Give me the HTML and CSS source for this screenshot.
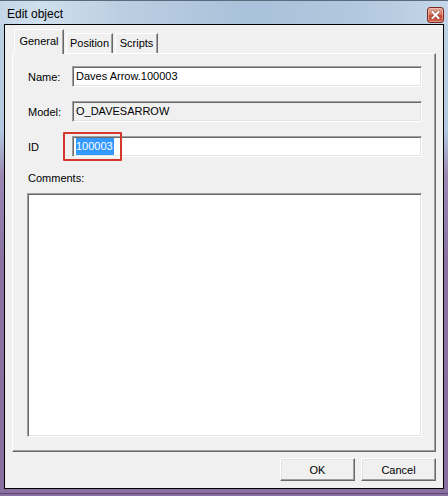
FILE: index.html
```html
<!DOCTYPE html>
<html>
<head>
<meta charset="utf-8">
<title>Edit object</title>
<link rel="stylesheet" href="styles.css">
</head>
<body>
<div class="window">
  <div class="titlebar">
    <span class="title">Edit object</span>
    <button class="close" aria-label="Close">
      <svg width="9" height="8" viewBox="0 0 9 8">
        <path d="M1.5 1 L7.5 7 M7.5 1 L1.5 7" stroke="#5a1a10" stroke-width="3.2" stroke-linecap="square" fill="none" opacity="0.45"/>
        <path d="M1.5 1 L7.5 7 M7.5 1 L1.5 7" stroke="#ffffff" stroke-width="2" stroke-linecap="square" fill="none"/>
      </svg>
    </button>
  </div>
  <div class="client">
    <div class="tabs">
      <div class="tab tab-general active">General</div>
      <div class="tab tab-position">Position</div>
      <div class="tab tab-scripts">Scripts</div>
    </div>
    <div class="panel">
      <div class="row">
        <span class="label">Name:</span>
        <div class="field">Daves Arrow.100003</div>
      </div>
      <div class="row">
        <span class="label">Model:</span>
        <div class="field readonly">O_DAVESARROW</div>
      </div>
      <div class="row id-row">
        <span class="label">ID</span>
        <div class="field"><span class="sel">100003</span></div>
        <span class="mark"></span>
      </div>
      <div class="comments-label">Comments:</div>
      <div class="field area"></div>
    </div>
    <div class="buttons">
      <button class="btn">OK</button>
      <button class="btn">Cancel</button>
    </div>
  </div>
  <div class="frame-bottom"></div>
</div>
</body>
</html>
```
FILE: styles.css
```css
* { box-sizing: border-box; }

html, body { margin: 0; padding: 0; }

body {
  width: 448px;
  height: 496px;
  overflow: hidden;
  background: linear-gradient(to bottom, #c0d3e6 0, #b3c9df 130px, #9c89b2 175px, #8b72a2 260px, #8a6fa1 100%);
  font-family: "Liberation Sans", Arial, sans-serif;
  font-size: 11px;
  color: #000;
}

.window {
  display: flex;
  flex-direction: column;
  height: 496px;
}

/* caption bar */
.titlebar {
  flex: none;
  height: 24px;
  display: flex;
  justify-content: space-between;
  align-items: flex-start;
  padding: 6px 4px 0 7px;
  border-top: 1px solid #5b6b7c;
  background: linear-gradient(to right, #c4d6e8 0, #d0dfed 40px, #bccfe2 120px, #a9c1da 250px, #b2c8de 360px, #c5d7e9 448px);
  font-size: 12px;
  line-height: 14px;
}

.close {
  width: 17px;
  height: 16px;
  margin: 0;
  padding: 0;
  display: flex;
  align-items: center;
  justify-content: center;
  border: 1px solid #7a2c20;
  border-radius: 3px;
  background: linear-gradient(to bottom, #e3a596 0, #d37a66 45%, #c24b35 55%, #c8604a 100%);
  box-shadow: inset 0 0 0 1px rgba(255, 220, 210, 0.45);
}

/* dialog client area */
.client {
  flex: none;
  height: 465px;
  margin: 0 4px;
  border: 1px solid #000;
  background: #f0f0f0;
  padding: 4px 7px 0 7px;
  display: flex;
  flex-direction: column;
}

.tabs {
  height: 24px;
  display: flex;
  align-items: flex-end;
  padding-left: 2px;
}

.tab {
  height: 20px;
  margin-right: 2px;
  display: flex;
  align-items: center;
  justify-content: center;
  padding-bottom: 1px;
  background: #f0f0f0;
  border-top: 1px solid #fff;
  border-left: 1px solid #fff;
  border-right: 1px solid #696969;
  box-shadow: inset -1px 0 #a0a0a0;
}

.tab.active {
  height: 25px;
  margin-bottom: -1px;
  position: relative;
  z-index: 1;
  padding-bottom: 3px;
}

.tab-general { width: 50px; }
.tab-position { width: 47px; }
.tab-scripts { width: 43px; }

.panel {
  width: 424px;
  height: 399px;
  border-top: 1px solid #fff;
  border-left: 1px solid #fff;
  border-right: 1px solid #696969;
  border-bottom: 1px solid #696969;
  box-shadow: inset -1px -1px #a0a0a0;
  padding: 12px 0 0 15px;
  display: flex;
  flex-direction: column;
}

.row {
  height: 21px;
  margin-bottom: 14px;
  display: flex;
  align-items: center;
  position: relative;
}

.label {
  width: 44px;
  flex: none;
}

.field {
  width: 350px;
  height: 21px;
  background: #fff;
  border-style: solid;
  border-width: 1px;
  border-color: #a0a0a0 #fff #fff #a0a0a0;
  box-shadow: inset 1px 1px #696969, inset -1px -1px #e3e3e3;
  padding: 1px 2px 0 3px;
  line-height: 17px;
  white-space: nowrap;
}

.field.readonly { background: #f0f0f0; }

.sel {
  display: inline-block;
  background: #3399ff;
  color: #fff;
  line-height: 17px;
  padding: 0 1px 0 0;
}

/* red callout around the ID value */
.mark {
  position: absolute;
  left: 35px;
  top: -4px;
  width: 59px;
  height: 29px;
  border: 2px solid #d2382b;
  border-radius: 1px;
}

.comments-label {
  height: 13px;
  line-height: 13px;
  margin-top: 1px;
}

.field.area {
  width: 395px;
  height: 244px;
  margin-top: 8px;
  margin-left: -1px;
}

.buttons {
  margin-top: 6px;
  display: flex;
  justify-content: flex-end;
  gap: 6px;
}

.btn {
  width: 75px;
  height: 23px;
  margin: 0;
  padding: 0;
  background: #f0f0f0;
  border-style: solid;
  border-width: 1px;
  border-color: #fff #696969 #696969 #fff;
  box-shadow: inset -1px -1px #a0a0a0, inset 1px 1px #e3e3e3;
  font-family: "Liberation Sans", Arial, sans-serif;
  font-size: 11px;
  color: #000;
}

.frame-bottom {
  flex: none;
  height: 1px;
  margin-top: 4px;
  background: #5a4670;
}
```
